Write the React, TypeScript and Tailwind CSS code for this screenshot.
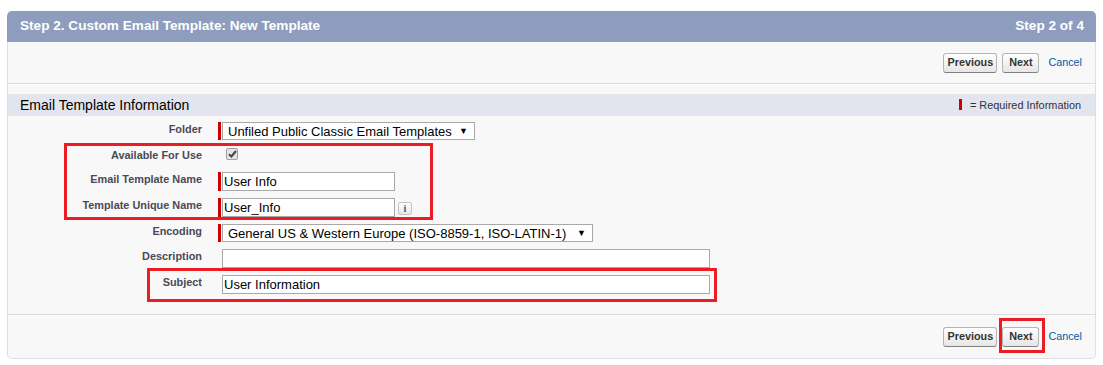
import React from 'react';

const font = { fontFamily: '"Liberation Sans", Arial, sans-serif' };

function Btn({ label, width }: { label: string; width: string }) {
  return (
    <button
      className={`${width} h-[20px] rounded-[3px] border border-[#b5b5b5] border-b-[#7f7f7f] bg-gradient-to-b from-white to-[#e6e6e6] text-[10.8px] font-bold text-[#333] leading-none`}
    >
      {label}
    </button>
  );
}

function ButtonRow({ className }: { className: string }) {
  return (
    <div className={`flex items-center justify-end pr-[13px] ${className}`}>
      <Btn label="Previous" width="w-[54px]" />
      <div className="w-[5px]" />
      <Btn label="Next" width="w-[37px]" />
      <a className="ml-[9px] text-[10.8px] text-[#015ba7]">Cancel</a>
    </div>
  );
}

function RequiredBar({ h }: { h: string }) {
  return <div className={`w-[3px] ${h} bg-[#c00] mr-[1px]`} />;
}

function Row({
  label,
  height,
  children,
}: {
  label: string;
  height: string;
  children: React.ReactNode;
}) {
  return (
    <div className={`flex ${height}`}>
      <div className="w-[210px] pr-[16px] pt-[1px] text-right text-[10.9px] leading-[13px] font-bold text-[#4a4a56]">
        {label}
      </div>
      <div className="flex items-start">{children}</div>
    </div>
  );
}

function Select({ value, width }: { value: string; width: string }) {
  return (
    <div
      className={`${width} h-[18px] border border-[#a9a9a9] bg-white flex items-center justify-between pl-[5px] pr-[6px] text-[13px] text-black leading-none`}
    >
      <span>{value}</span>
      <span className="text-[9px]">▼</span>
    </div>
  );
}

function TextBox({ value, width }: { value?: string; width: string }) {
  return (
    <div
      className={`${width} h-[19px] border border-[#a9a9a9] bg-white flex items-center pl-[1px] text-[13px] text-black leading-none`}
    >
      {value}
    </div>
  );
}

export default function App() {
  return (
    <div className="relative w-[1103px] h-[365px] bg-white pt-[11px]" style={font}>
      <div className="ml-[7px] w-[1089px]">
        {/* Header */}
        <div className="h-[31px] rounded-t-[5px] bg-[#8e9dbe] flex items-center justify-between pl-[13px] pr-[12px] text-white font-bold text-[13.6px]">
          <span>Step 2. Custom Email Template: New Template</span>
          <span>Step 2 of 4</span>
        </div>

        <div className="border-x border-b border-[#dcdfe3] rounded-b-[5px] bg-[#f8f8f8]">
          <ButtonRow className="h-[42px] border-b border-[#dbdbdb]" />
          <div className="h-[10px] border-t border-white" />

          {/* Section header */}
          <div className="h-[22px] bg-[#e2e5ee] flex items-center justify-between pl-[12px] pr-[14px]">
            <span className="text-[14px] text-black">Email Template Information</span>
            <span className="flex items-center text-[10.9px] text-[#333]">
              <span className="w-[3px] h-[11px] bg-[#c00] mr-[8px]" />= Required Information
            </span>
          </div>

          {/* Form */}
          <div className="pt-[6px] h-[199px] border-b border-[#dbdbdb]">
            <Row label="Folder" height="h-[26px]">
              <RequiredBar h="h-[18px]" />
              <Select value="Unfiled Public Classic Email Templates" width="w-[253px]" />
            </Row>
            <Row label="Available For Use" height="h-[24px]">
              <div className="ml-[8px] w-[12px] h-[12px] rounded-[2px] border border-[#a0a0a0] bg-[#e4e4e4] flex items-center justify-center">
                <svg width="9" height="8" viewBox="0 0 9 8">
                  <path d="M1 4.2 L3.4 6.5 L8 1" fill="none" stroke="#444" strokeWidth="2" />
                </svg>
              </div>
            </Row>
            <Row label="Email Template Name" height="h-[26px]">
              <RequiredBar h="h-[19px]" />
              <TextBox value="User Info" width="w-[173px]" />
            </Row>
            <Row label="Template Unique Name" height="h-[26px]">
              <RequiredBar h="h-[19px]" />
              <TextBox value="User_Info" width="w-[173px]" />
              <div className="ml-[3px] mt-[4px] w-[14px] h-[13px] rounded-[2px] border border-[#c4c4c4] bg-gradient-to-b from-white to-[#e8e8e8] flex items-center justify-center">
                <span
                  className="text-[10px] font-bold text-[#1a5fb4] leading-none"
                  style={{ fontFamily: '"Liberation Serif", serif' }}
                >
                  i
                </span>
              </div>
            </Row>
            <Row label="Encoding" height="h-[25px]">
              <RequiredBar h="h-[18px]" />
              <Select value="General US & Western Europe (ISO-8859-1, ISO-LATIN-1)" width="w-[371px]" />
            </Row>
            <Row label="Description" height="h-[26px]">
              <div className="w-[4px]" />
              <TextBox width="w-[488px]" />
            </Row>
            <Row label="Subject" height="h-[25px]">
              <div className="w-[4px]" />
              <TextBox value="User Information" width="w-[488px]" />
            </Row>
          </div>

          <ButtonRow className="h-[43px]" />
        </div>
      </div>

      {/* Annotation boxes */}
      <div className="absolute left-[64px] top-[143px] w-[369px] h-[77px] border-[3px] border-[#ec1c24]" />
      <div className="absolute left-[147px] top-[268px] w-[570px] h-[34px] border-[3px] border-[#ec1c24]" />
      <div className="absolute left-[999px] top-[318px] w-[46px] h-[35px] border-[3px] border-[#ec1c24]" />
    </div>
  );
}
